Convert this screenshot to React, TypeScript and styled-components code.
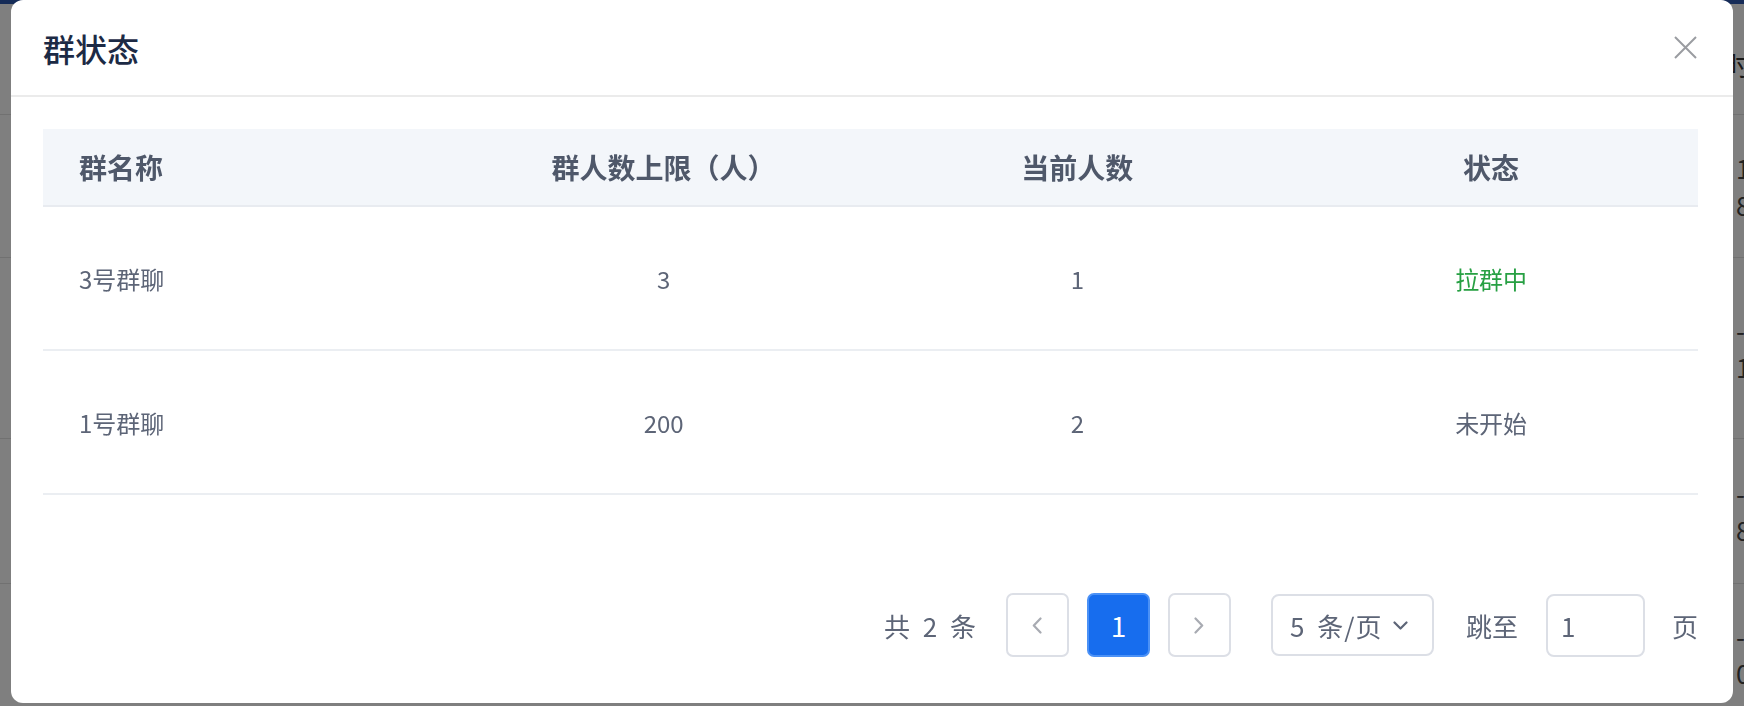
import styled, { createGlobalStyle } from 'styled-components';

const GlobalStyle = createGlobalStyle`
  * { box-sizing: border-box; }
  html, body { margin: 0; padding: 0; }
  body {
    width: 1744px;
    height: 706px;
    overflow: hidden;
    background: #ffffff;
    font-family: "Noto Sans CJK SC", "Noto Sans", sans-serif;
  }
`;

const COLORS = {
  title: '#1c2a45',
  head: '#4f586a',
  text: '#5d6577',
  green: '#27a043',
  line: '#ebeef2',
  border: '#dcdfe6',
  blue: '#176dee',
};

/* page under the mask, only its edges show */
const UnderPage = styled.div`
  width: 1924px;
  height: 706px;
  overflow: hidden;
  background: #ffffff;
  border-top: 4px solid #2d58b0;
`;

const UnderHead = styled.div`
  display: grid;
  grid-template-columns: 1fr 200px;
  height: 111px;
  padding-top: 40px;
  border-bottom: 1px solid #e3e3e3;
  font-size: 28px;
  color: #333333;
`;

const UnderRow = styled.div<{ $h: number }>`
  display: grid;
  grid-template-columns: 1fr 188px;
  align-content: center;
  height: ${(p) => p.$h}px;
  border-bottom: 1px solid #e3e3e3;
  font-size: 26px;
  line-height: 37px;
  color: #444444;
`;

const Mask = styled.div`
  position: fixed;
  inset: 0;
  background: rgba(0, 0, 0, 0.5);
  display: flex;
  align-items: flex-start;
  padding-left: 11px;
`;

const Dialog = styled.div`
  width: 1722px;
  height: 703px;
  background: #ffffff;
  border-radius: 12px;
  display: flex;
  flex-direction: column;
`;

const Header = styled.header`
  height: 97px;
  flex-shrink: 0;
  display: flex;
  align-items: center;
  justify-content: space-between;
  padding: 0 36px 0 32px;
  border-bottom: 2px solid #ebebeb;
`;

const Title = styled.h2`
  margin: 0;
  font-size: 32px;
  font-weight: 500;
  line-height: 1;
  color: ${COLORS.title};
`;

const CloseButton = styled.button`
  width: 23px;
  height: 23px;
  padding: 0;
  border: none;
  background: none;
  display: flex;
  cursor: pointer;
`;

const Body = styled.div`
  padding: 32px 35px 0 32px;
  display: flex;
  flex-direction: column;
`;

const Row = styled.div<{ $head?: boolean }>`
  display: grid;
  grid-template-columns: repeat(4, 1fr);
  align-items: center;
  height: ${(p) => (p.$head ? '78px' : '144px')};
  background: ${(p) => (p.$head ? '#f3f6fa' : '#ffffff')};
  border-bottom: 2px solid ${(p) => (p.$head ? '#e8ebf0' : COLORS.line)};
`;

const Cell = styled.div<{ $head?: boolean; $first?: boolean; $color?: string }>`
  text-align: ${(p) => (p.$first ? 'left' : 'center')};
  padding-left: ${(p) => (p.$first ? '36px' : '0')};
  font-size: ${(p) => (p.$head ? '28px' : '24px')};
  font-weight: ${(p) => (p.$head ? 600 : 400)};
  color: ${(p) => p.$color ?? (p.$head ? COLORS.head : COLORS.text)};
  white-space: nowrap;
`;

const Pager = styled.div`
  margin-top: 98px;
  height: 64px;
  display: flex;
  align-items: center;
  justify-content: flex-end;
  font-size: 26px;
  color: ${COLORS.text};
`;

const Total = styled.span`
  word-spacing: 7px;
  margin-right: 30px;
`;

const PageButtons = styled.div`
  display: flex;
  gap: 18px;
`;

const PageButton = styled.button<{ $active?: boolean }>`
  width: 63px;
  height: 64px;
  padding: 0;
  border-radius: 7px;
  border: 2px solid ${(p) => (p.$active ? '#4b91f6' : COLORS.border)};
  background: ${(p) => (p.$active ? COLORS.blue : '#ffffff')};
  color: ${(p) => (p.$active ? '#ffffff' : '#a8abb2')};
  font-family: inherit;
  font-size: 28px;
  display: flex;
  align-items: center;
  justify-content: center;
`;

const SizeSelect = styled.div`
  margin-left: 40px;
  width: 163px;
  height: 62px;
  border: 2px solid ${COLORS.border};
  border-radius: 8px;
  display: flex;
  align-items: center;
  padding-left: 17px;
  gap: 11px;
`;

const SelectText = styled.span`
  word-spacing: 5px;
  letter-spacing: 1px;
`;

const JumpLabel = styled.span`
  margin-left: 32px;
`;

const JumpInput = styled.input`
  margin-left: 28px;
  width: 99px;
  height: 63px;
  border: 2px solid ${COLORS.border};
  border-radius: 8px;
  padding: 0 0 0 13px;
  font-family: inherit;
  font-size: 26px;
  color: ${COLORS.text};
  outline: none;
`;

const Unit = styled.span`
  margin-left: 27px;
`;

const Chevron = ({ dir, color }: { dir: 'left' | 'right' | 'down'; color: string }) => {
  if (dir === 'down') {
    return (
      <svg width="15" height="9" viewBox="0 0 15 9" fill="none">
        <polyline points="1.5,1.5 7.5,7.5 13.5,1.5" stroke={color} strokeWidth="2.2" strokeLinecap="round" strokeLinejoin="round" />
      </svg>
    );
  }
  const pts = dir === 'left' ? '8.5,1.5 1.8,8.5 8.5,15.5' : '1.5,1.5 8.2,8.5 1.5,15.5';
  return (
    <svg width="10" height="17" viewBox="0 0 10 17" fill="none">
      <polyline points={pts} stroke={color} strokeWidth="2.2" strokeLinecap="round" strokeLinejoin="round" />
    </svg>
  );
};

const rows = [
  { name: '3号群聊', limit: '3', current: '1', status: '拉群中', green: true },
  { name: '1号群聊', limit: '200', current: '2', status: '未开始', green: false },
];

const underRows: { h: number; lines: [string, string] }[] = [
  { h: 143, lines: ['1', '8'] },
  { h: 181, lines: ['-0', '1'] },
  { h: 145, lines: ['-0', '8'] },
  { h: 140, lines: ['-0', '0'] },
];

export default function App() {
  return (
    <>
      <GlobalStyle />
      <UnderPage>
        <UnderHead>
          <span />
          <span>时</span>
        </UnderHead>
        {underRows.map((r, i) => (
          <UnderRow key={i} $h={r.h}>
            <span />
            <span>
              {r.lines[0]}
              <br />
              {r.lines[1]}
            </span>
          </UnderRow>
        ))}
      </UnderPage>
      <Mask>
        <Dialog>
          <Header>
            <Title>群状态</Title>
            <CloseButton aria-label="关闭">
              <svg width="23" height="23" viewBox="0 0 23 23">
                <path d="M1 1L22 22M22 1L1 22" stroke="#9a9ca1" strokeWidth="2" />
              </svg>
            </CloseButton>
          </Header>
          <Body>
            <Row $head>
              <Cell $head $first>群名称</Cell>
              <Cell $head>群人数上限（人）</Cell>
              <Cell $head>当前人数</Cell>
              <Cell $head>状态</Cell>
            </Row>
            {rows.map((r) => (
              <Row key={r.name}>
                <Cell $first>{r.name}</Cell>
                <Cell>{r.limit}</Cell>
                <Cell>{r.current}</Cell>
                <Cell $color={r.green ? COLORS.green : undefined}>{r.status}</Cell>
              </Row>
            ))}
            <Pager>
              <Total>共 2 条</Total>
              <PageButtons>
                <PageButton>
                  <Chevron dir="left" color="#a8abb2" />
                </PageButton>
                <PageButton $active>1</PageButton>
                <PageButton>
                  <Chevron dir="right" color="#a8abb2" />
                </PageButton>
              </PageButtons>
              <SizeSelect>
                <SelectText>5 条/页</SelectText>
                <Chevron dir="down" color="#5d6577" />
              </SizeSelect>
              <JumpLabel>跳至</JumpLabel>
              <JumpInput defaultValue="1" />
              <Unit>页</Unit>
            </Pager>
          </Body>
        </Dialog>
      </Mask>
    </>
  );
}
